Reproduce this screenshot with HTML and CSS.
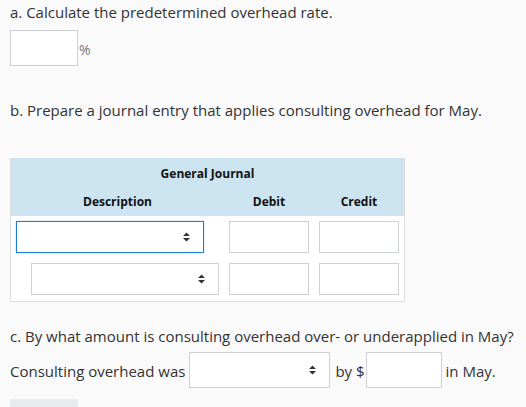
FILE: index.html
```html
<!DOCTYPE html>
<html>
<head>
<meta charset="utf-8">
<link rel="stylesheet" href="styles.css">
</head>
<body>
<div class="page">
  <p class="q q-a">a. Calculate the predetermined overhead rate.</p>
  <div class="rate-row">
    <span class="box rate-box"></span><span class="pct">%</span>
  </div>

  <p class="q q-b">b. Prepare a journal entry that applies consulting overhead for May.</p>

  <div class="journal">
    <div class="jhead">
      <div class="jtitle">General Journal</div>
      <div class="jcols">
        <div class="jc">Description</div>
        <div class="jc">Debit</div>
        <div class="jc">Credit</div>
      </div>
    </div>
    <div class="jbody">
      <div class="jrow">
        <div class="cell-desc">
          <div class="select focused"><span class="arrow"><svg width="7" height="10" viewBox="0 0 7 10"><path d="M3.5 0.5L7 4H0z M0 6h7L3.5 9.5z" fill="#333"/></svg></span></div>
        </div>
        <div class="cell-amt"><span class="box amt"></span></div>
        <div class="cell-amt"><span class="box amt"></span></div>
      </div>
      <div class="jrow">
        <div class="cell-desc indent">
          <div class="select"><span class="arrow"><svg width="7" height="10" viewBox="0 0 7 10"><path d="M3.5 0.5L7 4H0z M0 6h7L3.5 9.5z" fill="#333"/></svg></span></div>
        </div>
        <div class="cell-amt"><span class="box amt"></span></div>
        <div class="cell-amt"><span class="box amt"></span></div>
      </div>
    </div>
  </div>

  <p class="q q-c">c. By what amount is consulting overhead over- or underapplied in May?</p>
  <div class="answer-row">
    <span class="lbl">Consulting overhead was</span>
    <div class="select inline-select"><span class="arrow"><svg width="7" height="10" viewBox="0 0 7 10"><path d="M3.5 0.5L7 4H0z M0 6h7L3.5 9.5z" fill="#333"/></svg></span></div>
    <span class="lbl by">by $</span><span class="box by-box"></span>
    <span class="lbl">in May.</span>
  </div>
  <div class="btn-stub"></div>
</div>
</body>
</html>
```

FILE: styles.css
```css
html, body {
  margin: 0;
  padding: 0;
  background: #fafafa;
}
body {
  font-family: "Open Sans", "Liberation Sans", sans-serif;
  font-size: 15px;
  color: #333;
  overflow: hidden;
}
.page {
  padding: 2px 10px 0 10px;
}
.q {
  margin: 0;
  line-height: 20px;
}
.box {
  display: block;
  box-sizing: border-box;
  background: #fff;
  border: 1px solid #cdd1d6;
}
.rate-row {
  margin-top: 8px;
  height: 36px;
  display: flex;
  align-items: center;
}
.rate-box {
  width: 68px;
  height: 36px;
}
.pct {
  color: #777;
  font-size: 14px;
  margin-left: 1px;
  margin-top: 2px;
}
.q-b {
  margin-top: 34px;
}
.journal {
  margin-top: 38px;
  width: 395px;
  box-sizing: border-box;
  border: 1px solid #dcdcdc;
  border-top: none;
  background: #fff;
}
.jhead {
  background: #cce4ef;
  height: 58px;
  font-weight: 700;
  font-size: 12px;
  color: #111;
  box-sizing: border-box;
  padding-top: 7px;
}
.jtitle {
  text-align: center;
  line-height: 17px;
}
.jcols {
  display: grid;
  grid-template-columns: 213px 90px 90px;
  margin-top: 11px;
  line-height: 17px;
}
.jc {
  text-align: center;
}
.jbody {
  padding: 5px 0 6px 0;
  display: flex;
  flex-direction: column;
  gap: 10px;
}
.jrow {
  display: grid;
  grid-template-columns: 213px 90px 90px;
  height: 32px;
}
.cell-desc {
  padding-left: 5px;
  display: flex;
}
.cell-desc.indent {
  padding-left: 20px;
}
.cell-amt {
  padding-left: 5px;
  display: flex;
}
.amt {
  width: 80px;
  height: 32px;
}
.select {
  position: relative;
  box-sizing: border-box;
  width: 188px;
  height: 32px;
  background: #fff;
  border: 1px solid #cdd1d6;
  flex: none;
}
.select.focused {
  border-color: #1a7ed6;
  box-shadow: 0 0 2px rgba(26, 126, 214, 0.35);
}
.arrow {
  position: absolute;
  right: 13px;
  top: 50%;
  margin-top: -5px;
  width: 7px;
  height: 10px;
  line-height: 0;
}
.q-c {
  margin-top: 24px;
}
.answer-row {
  margin-top: 6px;
  height: 36px;
  display: flex;
  align-items: center;
}
.lbl {
  line-height: 20px;
  margin-top: 2px;
}
.inline-select {
  width: 141px;
  height: 36px;
  margin-left: 4px;
}
.by {
  margin-left: 5px;
}
.by-box {
  width: 76px;
  height: 36px;
  margin-left: 1px;
  margin-right: 4px;
}
.btn-stub {
  margin-top: 11px;
  width: 68px;
  height: 20px;
  background: #e8ebee;
}
```
